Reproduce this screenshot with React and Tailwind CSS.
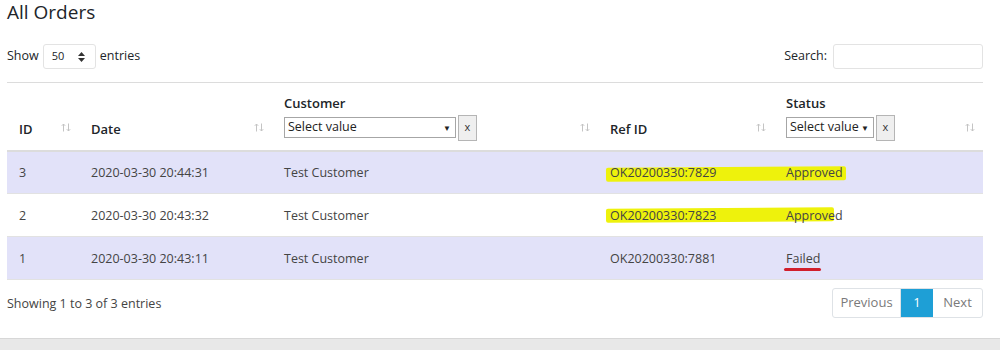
import React from 'react'

const rows = [
    { id: 3, date: '2020-03-30 20:44:31', customer: 'Test Customer', ref: 'OK20200330:7829', status: 'Approved', mark: 'w-[240px] top-[15px] h-[14px]' },
    { id: 2, date: '2020-03-30 20:43:32', customer: 'Test Customer', ref: 'OK20200330:7823', status: 'Approved', mark: 'w-[228px] top-[14px] h-[14px]' },
    { id: 1, date: '2020-03-30 20:43:11', customer: 'Test Customer', ref: 'OK20200330:7881', status: 'Failed' },
]

function SortIcon() {
    return (
        <svg className="absolute right-[8px] bottom-[18px]" width="10" height="9" viewBox="0 0 10 9" fill="none" stroke="#c4c4c4" strokeWidth="1">
            <path d="M2.5 8.5V1M0.8 2.8L2.5 1L4.2 2.8" />
            <path d="M7.5 0.5V8M5.8 6.2L7.5 8L9.2 6.2" />
        </svg>
    )
}

function FilterSelect({ width }) {
    return (
        <div className="flex items-center gap-[2px] font-normal">
            <div className={`${width} h-[21px] border border-[#a6a6a6] bg-white flex items-center justify-between pl-[3px] pr-[4px] text-[12.5px] text-[#222]`}>
                <span>Select value</span>
                <span className="text-[8px]">▼</span>
            </div>
            <div className="w-[19px] h-[26px] border border-[#b5b5b5] bg-[#efefef] flex items-center justify-center text-[11px] text-[#333]">x</div>
        </div>
    )
}

export default function App() {
    return (
        <div className="w-[1000px] h-[350px] bg-white overflow-hidden text-[#212529] text-[12.5px]" style={{ fontFamily: '"Open Sans", "Noto Sans", sans-serif' }}>
            <div className="px-[7px] w-[990px]">
                <h1 className="text-[19px] leading-[24px] font-medium">All Orders</h1>

                <div className="mt-[20px] flex items-center justify-between h-[25px]">
                    <div className="flex items-center gap-[4px]">
                        <span>Show</span>
                        <div className="w-[53px] h-[25px] border border-[#e3e3e3] rounded-[3px] flex items-center pl-[8px] gap-[14px] text-[11px]">
                            <span>50</span>
                            <svg width="7" height="10" viewBox="0 0 7 10" fill="#333">
                                <path d="M0 4L3.5 0L7 4Z" />
                                <path d="M0 6L3.5 10L7 6Z" />
                            </svg>
                        </div>
                        <span>entries</span>
                    </div>
                    <div className="flex items-center gap-[6px]">
                        <span>Search:</span>
                        <div className="w-[150px] h-[25px] border border-[#e3e3e3] rounded-[3px]" />
                    </div>
                </div>

                <table className="mt-[13px] w-[976px] table-fixed border-collapse border-t border-[#dcdcdc]">
                    <colgroup>
                        <col className="w-[72px]" />
                        <col className="w-[193px]" />
                        <col className="w-[326px]" />
                        <col className="w-[176px]" />
                        <col className="w-[209px]" />
                    </colgroup>
                    <thead>
                        <tr className="h-[68px] border-b-2 border-[#dcdcdc] text-left text-[13px]">
                            <th className="relative align-bottom pl-[12px] pb-[10px] font-semibold">ID<SortIcon /></th>
                            <th className="relative align-bottom pl-[12px] pb-[10px] font-semibold">Date<SortIcon /></th>
                            <th className="relative align-bottom pl-[12px] pb-[13px] font-semibold">
                                <div className="mb-[1px]">Customer</div>
                                <div className="-mb-[4px]"><FilterSelect width="w-[172px]" /></div>
                                <SortIcon />
                            </th>
                            <th className="relative align-bottom pl-[12px] pb-[10px] font-semibold">Ref ID<SortIcon /></th>
                            <th className="relative align-bottom pl-[12px] pb-[13px] font-semibold">
                                <div className="mb-[1px]">Status</div>
                                <div className="-mb-[4px]"><FilterSelect width="w-[88px]" /></div>
                                <SortIcon />
                            </th>
                        </tr>
                    </thead>
                    <tbody>
                        {rows.map((r, i) => (
                            <tr key={r.id} className={`h-[43px] border-b border-[#e2e2e2] ${i % 2 === 0 ? 'bg-[#e2e2f9]' : 'bg-white'} text-[#444]`}>
                                <td className="pl-[12px] pt-[2px]">{r.id}</td>
                                <td className="pl-[12px] pt-[2px]">{r.date}</td>
                                <td className="pl-[12px] pt-[2px]">{r.customer}</td>
                                <td className="pl-[12px] pt-[2px] relative">
                                    <span className="relative z-10">{r.ref}</span>
                                    {r.mark && (
                                        <span className={`absolute z-0 left-[8px] ${r.mark} bg-[#eef20c] rounded-[2px] -rotate-[0.4deg]`} />
                                    )}
                                </td>
                                <td className="pl-[12px] pt-[2px] relative">
                                    <span className="relative z-10">
                                        {r.status}
                                        {r.status === 'Failed' && (
                                            <span className="absolute -left-[2px] -right-[1px] -bottom-[4px] h-[3px] bg-[#d11f2c] rounded-full" />
                                        )}
                                    </span>
                                </td>
                            </tr>
                        ))}
                    </tbody>
                </table>

                <div className="mt-[8px] flex items-center justify-between">
                    <span className="text-[#444] pt-[2px]">Showing 1 to 3 of 3 entries</span>
                    <div className="flex h-[30px] border border-[#dee2e6] rounded-[3px] text-[13px] text-[#7a7a7a]">
                        <span className="w-[68px] flex items-center justify-center border-r border-[#dee2e6]">Previous</span>
                        <span className="w-[32px] flex items-center justify-center bg-[#1e9fd6] text-white">1</span>
                        <span className="w-[49px] flex items-center justify-center">Next</span>
                    </div>
                </div>
            </div>
            <div className="mt-[20px] h-[30px] bg-[#e8e8e8] border-t border-[#d7d7d7]" />
        </div>
    )
}
